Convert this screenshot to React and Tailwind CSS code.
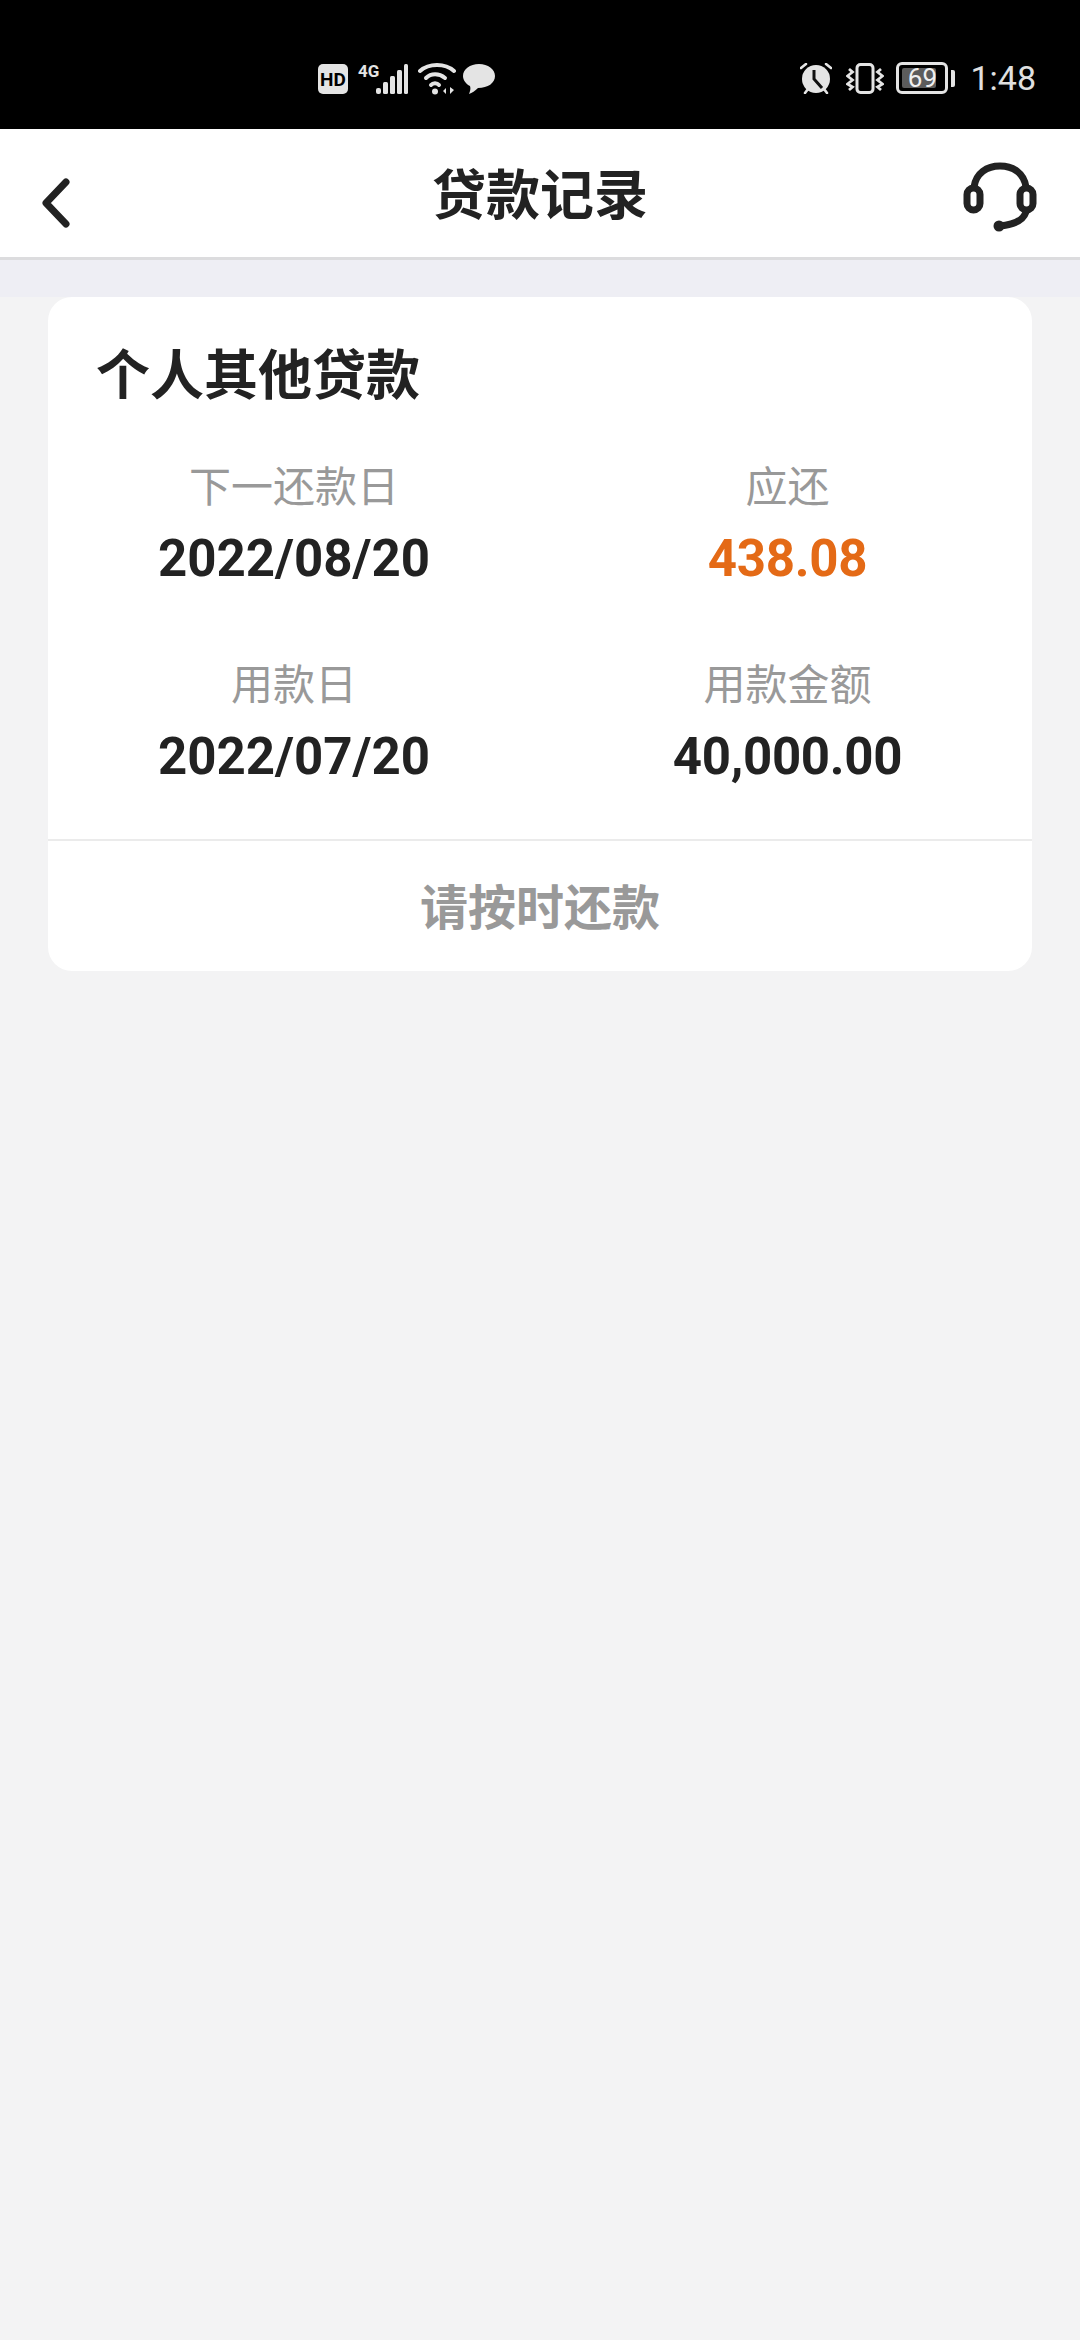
// App.jsx
const cjk = { fontFamily: '"Noto Sans CJK SC", "Noto Sans", sans-serif' };
const num = { fontFamily: 'Roboto, "Noto Sans", sans-serif' };

const WifiIcon = () => (
  <svg width="38" height="32" viewBox="0 0 38 32" fill="none" stroke="#e4e4e4" strokeWidth="4" strokeLinecap="round">
    <path d="M2 8 C11 0 27 0 36 8" />
    <path d="M8 15 C13 10 21 10 27 15" />
    <path d="M13 22 C15 19.5 19 19.5 21 22" />
    <circle cx="17" cy="28.5" r="3" fill="#e4e4e4" stroke="none" />
    <path d="M28 31 L28 25 L25 28 Z M32 24 L32 31 L36 27 Z" fill="#e4e4e4" stroke="none" />
  </svg>
);

const BubbleIcon = () => (
  <svg width="32" height="30" viewBox="0 0 32 30" fill="#e4e4e4">
    <path d="M16 0 C25 0 32 5 32 12 C32 19 25 24 15 24 C12 27 9 29 6 30 C7 27 8 25 7 22 C3 20 0 16 0 12 C0 5 7 0 16 0 Z" />
  </svg>
);

const AlarmIcon = () => (
  <svg width="32" height="31" viewBox="0 0 32 31" fill="none">
    <circle cx="16" cy="16" r="14" fill="#e4e4e4" />
    <path d="M14 7 L14 16 L22 25" stroke="#111" strokeWidth="3" fill="none" />
    <path d="M1 5 L6 1 M31 5 L26 1 M5 30 L8 26 M27 30 L24 26" stroke="#e4e4e4" strokeWidth="2.6" strokeLinecap="round" />
  </svg>
);

const VibrateIcon = () => (
  <svg width="38" height="31" viewBox="0 0 38 31" fill="none" stroke="#e4e4e4">
    <rect x="11" y="1.5" width="16" height="28" rx="3.5" strokeWidth="3" />
    <path d="M3 6 L6.5 9 L1.5 13 L6.5 17 L1.5 21 L6.5 24 L3 27" strokeWidth="2.8" />
    <path d="M35 6 L31.5 9 L36.5 13 L31.5 17 L36.5 21 L31.5 24 L35 27" strokeWidth="2.8" />
  </svg>
);

const Battery = () => (
  <div className="flex items-center gap-[3px]">
    <div className="relative h-[32px] w-[52px] rounded-[6px] border-[3px] border-[#e4e4e4] p-[3px]">
      <div className="h-full w-[85%] rounded-[2px] bg-[#5c5c5c]" />
      <span
        className="absolute inset-0 flex items-center justify-center text-[26px] leading-none text-[#f0f0f0]"
        style={num}
      >
        69
      </span>
    </div>
    <div className="h-[17px] w-[4px] rounded-r-[2px] bg-[#e4e4e4]" />
  </div>
);

const StatusBar = () => (
  <div className="flex h-[129px] items-end bg-black pb-[34px]">
    <div className="ml-[318px] flex items-center">
      <span
        className="flex h-[30px] w-[30px] items-center justify-center rounded-[5px] bg-[#e4e4e4] text-[19px] font-bold leading-none text-black"
        style={num}
      >
        HD
      </span>
      <div className="relative ml-[10px] flex h-[30px] w-[50px] items-end justify-end">
        <span
          className="absolute left-0 top-[-1px] text-[17px] font-bold leading-none text-[#e4e4e4]"
          style={num}
        >
          4G
        </span>
        <svg width="32" height="30" viewBox="0 0 32 30" fill="#e4e4e4">
          <rect x="0" y="24" width="5" height="6" rx="2" />
          <rect x="7" y="18" width="5" height="12" rx="1.5" />
          <rect x="14" y="12" width="5" height="18" rx="1.5" />
          <rect x="21" y="6" width="5" height="24" rx="1.5" />
          <rect x="28" y="0" width="4" height="30" rx="1.5" />
        </svg>
      </div>
      <div className="ml-[10px]">
        <WifiIcon />
      </div>
      <div className="ml-[7px]">
        <BubbleIcon />
      </div>
    </div>
    <div className="ml-auto mr-[44px] flex items-center">
      <AlarmIcon />
      <div className="ml-[14px]">
        <VibrateIcon />
      </div>
      <div className="ml-[12px]">
        <Battery />
      </div>
      <span className="ml-[15px] text-[34px] leading-none text-[#e0e0e0]" style={num}>
        1:48
      </span>
    </div>
  </div>
);

const Header = () => (
  <div className="grid h-[131px] grid-cols-[1fr_auto_1fr] items-center border-b-[3px] border-[#dcdcde] bg-white">
    <svg className="ml-[40px] mt-[20px]" width="32" height="50" viewBox="0 0 32 50" fill="none" stroke="#222" strokeWidth="7" strokeLinecap="round" strokeLinejoin="round">
      <path d="M26 4 L6 25 L26 46" />
    </svg>
    <span className="mb-[2px] text-[54px] font-bold leading-none text-[#222]" style={cjk}>
      贷款记录
    </span>
    <svg className="ml-auto mr-[43px] mt-[8px]" width="74" height="70" viewBox="0 0 74 70" fill="none" stroke="#222" strokeWidth="7" strokeLinecap="round">
      <path d="M11 25 C13 11 24 4 37 4 C50 4 61 11 63 25" />
      <rect x="4" y="26" width="13" height="22" rx="6.5" />
      <rect x="57" y="26" width="13" height="22" rx="6.5" />
      <path d="M63 50 C60 59 50 63 36 64" />
      <circle cx="36" cy="64" r="5.5" fill="#222" stroke="none" />
    </svg>
  </div>
);

const InfoCell = ({ label, value, accent, right }) => (
  <div className={`flex flex-col items-center ${right ? "pl-[3px]" : ""}`}>
    <span className="text-[42px] leading-[48px] text-[#999]" style={cjk}>
      {label}
    </span>
    <span
      className={`mt-[26px] text-[51px] font-bold leading-[50px] ${accent ? "text-[#e46a16]" : "text-[#222]"} ${right ? "tracking-[-0.3px]" : ""}`}
      style={num}
    >
      {value}
    </span>
  </div>
);

const LoanCard = () => (
  <div className="mx-[48px] rounded-[24px] bg-white">
    <div className="px-[48px] pt-[41px] text-[54px] font-bold leading-[68px] text-[#222]" style={cjk}>
      个人其他贷款
    </div>
    <div className="mt-[54px] grid grid-cols-2 gap-y-[74px] pb-[57px]">
      <InfoCell label="下一还款日" value="2022/08/20" />
      <InfoCell label="应还" value="438.08" accent right />
      <InfoCell label="用款日" value="2022/07/20" />
      <InfoCell label="用款金额" value="40,000.00" right />
    </div>
    <div
      className="flex h-[132px] items-center justify-center border-t-2 border-[#ebebeb] pb-[4px] text-[48px] font-bold leading-none text-[#999]"
      style={cjk}
    >
      请按时还款
    </div>
  </div>
);

export default function App() {
  return (
    <div className="min-h-[2340px] bg-[#f3f3f4]">
      <StatusBar />
      <Header />
      <div className="h-[37px] bg-[#eeeef4]" />
      <LoanCard />
    </div>
  );
}
